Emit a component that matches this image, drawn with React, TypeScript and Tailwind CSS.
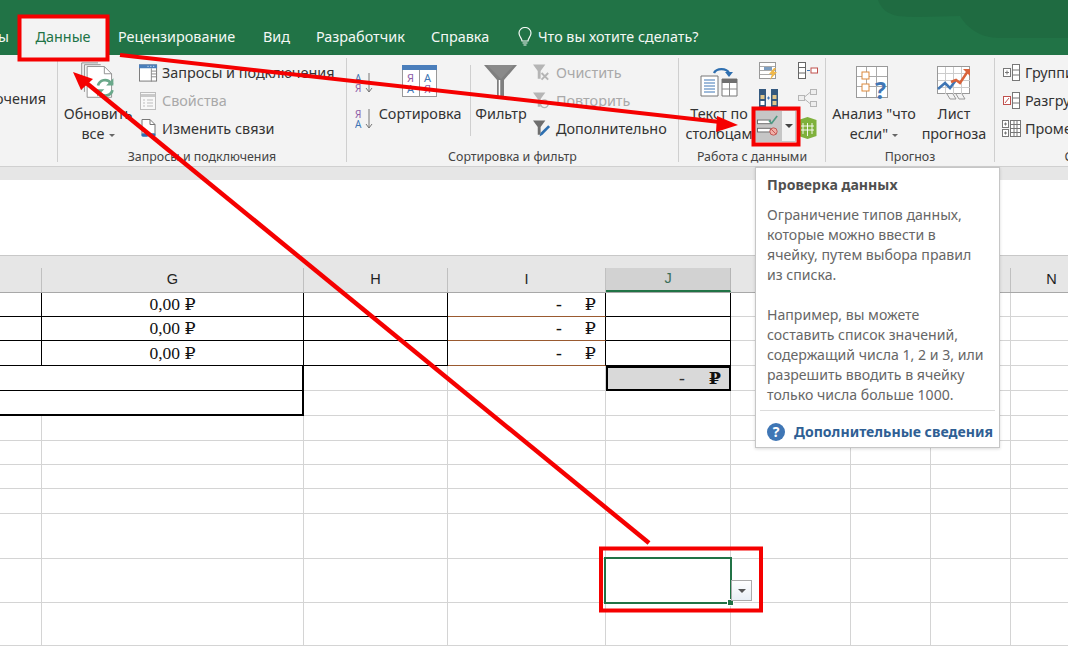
import React from 'react';

const Tab: React.FC<{ label: string; width: string }> = ({ label, width }) => (
  <div className={`${width} shrink-0 h-[37px] flex items-center text-[14.4px] text-[#f4f8f5]`}>{label}</div>
);

const SmallBtn: React.FC<{ icon: React.ReactNode; label: string; disabled?: boolean }> = ({ icon, label, disabled }) => (
  <div className={`h-[28px] flex items-center gap-[4px] text-[14.4px] whitespace-nowrap ${disabled ? 'text-[#a9a9a9]' : 'text-[#333]'}`}>
    <div className="w-[19px] flex justify-center shrink-0">{icon}</div>
    <span>{label}</span>
  </div>
);

const Group: React.FC<{ label: string; width: string; children: React.ReactNode }> = ({ label, width, children }) => (
  <div className={`${width} shrink-0 flex flex-col border-r border-[#cfcfcf]`}>
    <div className="flex-1 flex min-h-0">{children}</div>
    <div className="h-[16px] mb-[-3px] leading-[16px] text-center text-[12.4px] text-[#444] whitespace-nowrap">{label}</div>
  </div>
);

/* ---------- ribbon icons ---------- */
const RefreshIcon = () => (
  <svg width="38" height="38" viewBox="0 0 42 42" fill="none">
    <path d="M3 1h18M3 1v30" stroke="#8a8a8a" />
    <path d="M6 3h18M6 3v30" stroke="#8a8a8a" />
    <path d="M9 5h19l8 8v26H9z" fill="#fff" stroke="#8a8a8a" />
    <path d="M28 5v8h8" stroke="#8a8a8a" />
    <path d="M21 26a8 8 0 0 1 14-3l2 2M37 31a8 8 0 0 1-14 3l-2-2" stroke="#6aa88a" strokeWidth="3" />
    <path d="M38 18v8h-8zM20 38v-8h8z" fill="#6aa88a" />
  </svg>
);
const QueriesIcon = () => (
  <svg width="20" height="20" viewBox="0 0 20 20">
    <rect x=".5" y="1.5" width="18" height="17" fill="#fff" stroke="#777" />
    <rect x="0" y="1" width="19" height="4" fill="#4a7ebb" />
    <path d="M13 8h6M13 11h6M13 14h6M13 5v14" stroke="#888" />
    <path d="M9 3h1M12 3h1M15 3h1" stroke="#fff" />
  </svg>
);
const PropsIcon = () => (
  <svg width="17" height="18" viewBox="0 0 17 18" fill="none" stroke="#bdbdbd">
    <rect x=".5" y=".5" width="15" height="17" fill="#f8f8f8" />
    <path d="M1 3.5h14" strokeWidth="3" stroke="#c9c9c9" />
    <path d="M3 8h2M7 8h6M3 11h2M7 11h6M3 14h2M7 14h6" />
  </svg>
);
const LinksIcon = () => (
  <svg width="18" height="20" viewBox="0 0 18 20" fill="none">
    <path d="M2 .5h8l5 5v10H2z" fill="#fff" stroke="#777" />
    <path d="M10 .5v5h5" stroke="#777" />
    <path d="M3 16h4M10 16h4" stroke="#2e6fb0" strokeWidth="3.4" strokeLinecap="round" />
    <path d="M6 16h6" stroke="#2e6fb0" strokeWidth="1.5" />
  </svg>
);
const SortSmall: React.FC<{ top: string; bottom: string; topC: string; botC: string }> = ({ top, bottom, topC, botC }) => (
  <svg width="19" height="22" viewBox="0 0 19 22">
    <text x="0" y="10" fontSize="10" fontFamily="Noto Sans" fill={topC}>{top}</text>
    <text x="0" y="20" fontSize="10" fontFamily="Noto Sans" fill={botC}>{bottom}</text>
    <path d="M14 1v19M11 16l3 4 3-4" fill="none" stroke="#777" />
  </svg>
);
const SortBig = () => (
  <svg width="36" height="32" viewBox="0 0 36 32">
    <rect x=".5" y=".5" width="34" height="31" fill="#fff" stroke="#999" />
    <rect x="0" y="0" width="35" height="5" fill="#4a7ebb" />
    <path d="M17.5 5v26" stroke="#999" />
    <text x="5" y="17" fontSize="11" fontFamily="Noto Sans" fill="#8e5fa8">Я</text>
    <text x="5" y="28" fontSize="11" fontFamily="Noto Sans" fill="#3f76b5">А</text>
    <text x="22" y="17" fontSize="11" fontFamily="Noto Sans" fill="#3f76b5">А</text>
    <text x="22" y="28" fontSize="11" fontFamily="Noto Sans" fill="#8e5fa8">Я</text>
  </svg>
);
const FilterBig = () => (
  <svg width="34" height="34" viewBox="0 0 34 34">
    <path d="M0 0h33L20 15v18h-7V15z" fill="#7f7f7f" />
    <path d="M3 0h27L17 14z" fill="#8a8a8a" />
    <path d="M15.5 15v18" stroke="#fff" strokeWidth="1.5" />
  </svg>
);
const FilterSmall: React.FC<{ color: string; children?: React.ReactNode }> = ({ color, children }) => (
  <svg width="20" height="20" viewBox="0 0 20 20">
    <path d="M0 1h13L8 8v8H5V8z" fill={color} />
    {children}
  </svg>
);
const TextColIcon = () => (
  <svg width="38" height="32" viewBox="0 0 38 32" fill="none">
    <path d="M1 11h17v20H1z" fill="#fff" stroke="#777" />
    <path d="M4 15h11M4 18h11M4 21h11M4 24h11M4 27h11" stroke="#3f76b5" />
    <path d="M22 14h15v17H22z" fill="#fff" stroke="#777" />
    <path d="M22 14h15v4H22z" fill="#6e6e6e" />
    <path d="M29.5 18v13M22 24h15" stroke="#888" />
    <path d="M14 8a8 6 0 0 1 15 0" stroke="#2e6fb0" strokeWidth="2.4" />
    <path d="M25 7h8l-4 5z" fill="#2e6fb0" />
  </svg>
);
const FlashIcon = () => (
  <svg width="19" height="18" viewBox="0 0 19 18" fill="none">
    <rect x=".5" y=".5" width="16" height="16" fill="#fff" stroke="#999" />
    <path d="M1 4.5h15M1 8.5h15M1 12.5h15" stroke="#aaa" />
    <rect x="5" y="5" width="8" height="3" fill="#7b9dc0" />
    <path d="M15 6l-5 6h3l-2 6 7-8h-3l2-4z" fill="#f0b84a" />
  </svg>
);
const SplitIcon = () => (
  <svg width="20" height="17" viewBox="0 0 20 17" fill="none">
    <rect x=".5" y=".5" width="7" height="16" fill="#fff" stroke="#666" />
    <path d="M1 5.5h6M1 11h6" stroke="#666" />
    <path d="M9 8.5h3" stroke="#3f76b5" />
    <rect x="13" y="6" width="6.5" height="5" fill="#fff" stroke="#c0504d" />
  </svg>
);
const DupIcon = () => (
  <svg width="20" height="18" viewBox="0 0 20 18">
    <rect x="0" y="0" width="7" height="18" fill="#34597f" />
    <rect x="1.5" y="6" width="4" height="4" fill="#e2c88c" />
    <rect x="1.5" y="12" width="4" height="4" fill="#fff" />
    <rect x="12" y="0" width="7" height="18" fill="#34597f" />
    <rect x="13.5" y="6" width="4" height="4" fill="#e2c88c" />
    <rect x="13.5" y="12" width="4" height="4" fill="#e2c88c" />
    <path d="M8 9h3M9.5 7.5v3" stroke="#3f76b5" />
  </svg>
);
const RelIcon = () => (
  <svg width="19" height="18" viewBox="0 0 19 18" fill="none" stroke="#b5b5b5">
    <rect x=".5" y="6.5" width="6" height="5" fill="#eee" />
    <rect x="12.5" y=".5" width="6" height="5" fill="#eee" />
    <rect x="12.5" y="12.5" width="6" height="5" fill="#eee" />
    <path d="M6.5 8l6-5M6.5 10l6 5" />
  </svg>
);
const ValidationIcon = () => (
  <svg width="24" height="22" viewBox="0 0 24 24" fill="none">
    <rect x=".5" y="5.5" width="14" height="4" fill="#fff" stroke="#666" />
    <rect x=".5" y="14.5" width="14" height="4" fill="#fff" stroke="#666" />
    <path d="M13 6l3 3 6-8" stroke="#4f9a83" strokeWidth="1.8" />
    <circle cx="18" cy="18" r="4" fill="#f0b0a8" stroke="#c0504d" />
    <path d="M15.5 15.5l5 5" stroke="#c0504d" />
  </svg>
);
const ModelIcon = () => (
  <svg width="19" height="22" viewBox="0 0 19 22">
    <path d="M9.5 0l9 3v16l-9 3-9-3V3z" fill="#7fb13c" />
    <path d="M5 6v11M9.5 6v13M14 6v11M3 9h13M3 13h13" stroke="#fff" strokeWidth=".9" />
  </svg>
);
const WhatIfIcon = () => (
  <svg width="36" height="36" viewBox="0 0 36 36" fill="none">
    <rect x=".5" y=".5" width="31" height="31" fill="#fff" stroke="#999" />
    <path d="M10.5 1v30M20.5 1v30M1 10.5h30M1 20.5h30" stroke="#aaa" />
    <rect x="6" y="6" width="7" height="7" fill="#fff" stroke="#dd8a3c" />
    <rect x="6" y="18" width="7" height="7" fill="#fff" stroke="#dd8a3c" />
    <text x="19" y="33" fontSize="23" fontWeight="700" fontFamily="Noto Sans" fill="#3f76b5">?</text>
  </svg>
);
const ForecastIcon = () => (
  <svg width="34" height="34" viewBox="0 0 34 34" fill="none">
    <rect x=".5" y=".5" width="32" height="27" fill="#fff" stroke="#999" />
    <path d="M8.5 1v27M16.5 1v27M24.5 1v27M1 7.5h32M1 14.5h32M1 21.5h32" stroke="#ccc" />
    <path d="M1 23l7-6 5 5 6-8" stroke="#3f76b5" strokeWidth="2.5" />
    <path d="M14 16l5-2 4 3 8-12" stroke="#d9623a" strokeWidth="2.5" />
    <path d="M26 3h7v7z" fill="#d9623a" />
    <path d="M10 28l3 5h6l-3-5M19 28l3 5h6l-3-5" stroke="#999" />
  </svg>
);
const OutlineIcon: React.FC<{ red?: boolean }> = ({ red }) => (
  <svg width="18" height="18" viewBox="0 0 18 18" fill="none" stroke="#777">
    <rect x="9.5" y=".5" width="7" height="16" fill="#fff" />
    <path d="M10 6h6M10 11h6" />
    <rect x=".5" y="4.5" width="7" height="8" fill="#fff" stroke={red ? '#c0504d' : '#777'} />
    {red ? <path d="M2 11l4-5" stroke="#c0504d" /> : <path d="M2 8.5h4M4 6.5v4" />}
  </svg>
);
const SubtotalIcon = () => (
  <svg width="19" height="18" viewBox="0 0 19 18" fill="none" stroke="#777">
    <rect x=".5" y=".5" width="6" height="7" fill="#fff" />
    <rect x=".5" y="9.5" width="6" height="7" fill="#fff" />
    <path d="M2 4h3M3.5 2.5v3M2 13h3M3.5 11.5v3" />
    <rect x="8.5" y=".5" width="10" height="16" fill="#fff" />
    <path d="M9 4.5h9M9 8.5h9M9 12.5h9M12 1v15M15 1v15" />
  </svg>
);
const Caret = () => <span className="inline-block ml-[4px] align-middle w-0 h-0 border-x-[3px] border-x-transparent border-t-[3px] border-t-[#666]" />;

const BigBtn: React.FC<{ icon: React.ReactNode; lines: React.ReactNode[]; width: string; top?: string }> = ({ icon, lines, width, top = 'pt-[7px]' }) => (
  <div className={`${width} shrink-0 flex flex-col items-center text-[14.4px] leading-[20px] text-[#333] whitespace-nowrap`}>
    <div className={`h-[46px] ${top} flex items-start justify-center`}>{icon}</div>
    {lines.map((l, i) => <div key={i}>{l}</div>)}
  </div>
);

/* ---------- sheet ---------- */
const HeadCell: React.FC<{ w: string; label?: string; selected?: boolean }> = ({ w, label, selected }) => (
  <div className={`${w} shrink-0 h-[24px] flex items-center justify-center text-[14.5px] font-['Liberation_Sans',sans-serif] ${selected ? 'bg-[#d2d2d2] text-[#3a6d58] border-b-2 border-b-[#217346] mb-[-1px] border-r border-r-[#b5b5b5]' : 'text-[#222] border-r border-r-[#c0c0c0]'}`}>{label}</div>
);

const Rub: React.FC<{ children: React.ReactNode }> = ({ children }) => (
  <span className="font-['Liberation_Serif','DejaVu_Serif',serif] text-[17.5px] text-[#111]">{children}</span>
);

const Cell: React.FC<{ w: string; cls?: string; children?: React.ReactNode }> = ({ w, cls = 'border-r border-b border-[#d4d4d4]', children }) => (
  <div className={`${w} shrink-0 h-full ${cls}`}>{children}</div>
);

const A = 'w-[42px]', G = 'w-[262px]', H = 'w-[144px]', I = 'w-[158px]', J = 'w-[125px]', K = 'w-[120px]', L = 'w-[80px]', M = 'w-[80px]', N = 'w-[82px]';

const Rest = () => (
  <>
    <Cell w={K} />
    <Cell w={L} />
    <Cell w={M} />
    <Cell w={N} />
  </>
);

const MoneyRow: React.FC<{ h: string }> = ({ h }) => (
  <div className={`flex ${h}`}>
    <Cell w={A} cls="border-r border-b border-black" />
    <Cell w={G} cls="border-r border-b border-black flex items-center justify-center"><Rub>0,00 ₽</Rub></Cell>
    <Cell w={H} cls="border-r border-b border-black" />
    <Cell w={I} cls="border-r border-r-black border-b border-b-[#9a5a30] flex items-center justify-end pr-[9px]">
      <Rub><span className="font-bold mr-[23px]">-</span>₽</Rub>
    </Cell>
    <Cell w={J} cls="border-r border-b border-black" />
    <Rest />
  </div>
);

const heights = ['h-[25px]', 'h-[24px]', 'h-[24px]', 'h-[25px]', 'h-[45px]', 'h-[44px]', 'h-[43px]'];

const App: React.FC = () => (
  <div className="relative w-[1068px] h-[647px] overflow-hidden bg-white font-['Noto_Sans',sans-serif]">
    {/* Title band with tabs */}
    <div className="relative h-[55px] bg-[#217346] overflow-hidden">
      <svg className="absolute right-0 top-0" width="240" height="40" viewBox="0 0 240 40">
        <path d="M0 0h50c4 10 10 14 20 16 20 2 40 0 62 0 6 10 18 22 40 22h68V0z" fill="#1f6b41" />
      </svg>
      <div className="relative h-full flex items-end whitespace-nowrap">
        <div className="w-[9px] overflow-hidden flex justify-end"><Tab label="ы" width="w-auto" /></div>
        <div className="h-[37px] ml-[11px] mr-[12px] w-[86px] bg-[#f3f3f3] text-[#217346] text-[14.4px] flex items-center justify-center">Данные</div>
        <Tab label="Рецензирование" width="w-[145px]" />
        <Tab label="Вид" width="w-[53px]" />
        <Tab label="Разработчик" width="w-[115px]" />
        <Tab label="Справка" width="w-[85px]" />
        <div className="h-[37px] flex items-center gap-[4px] text-[14.3px] text-[#f4f8f5]">
          <svg width="18" height="20" viewBox="0 0 18 20" fill="none" stroke="#f4f8f5" strokeWidth="1.2">
            <path d="M6 14c0-3-3-4-3-8a6 5.5 0 0 1 12 0c0 4-3 5-3 8z" />
            <path d="M6.5 16h5M7.5 18h3" />
          </svg>
          <span>Что вы хотите сделать?</span>
        </div>
      </div>
    </div>

    {/* Ribbon */}
    <div className="h-[111px] bg-[#f3f3f3] flex overflow-hidden pt-[3px] pb-[4px]">
      <Group label="" width="w-[58px]">
        <div className="w-[46px] pt-[31px] text-[14.4px] leading-[20px] text-[#333] whitespace-nowrap flex justify-end">очения</div>
      </Group>
      <Group label="Запросы и подключения" width="w-[289px]">
        <div className="flex pl-[4px] gap-[5px]">
          <BigBtn width="w-[72px]" top="pt-[4px]" icon={<RefreshIcon />} lines={['Обновить', <>все<Caret /></>]} />
          <div className="pt-[1px]">
            <SmallBtn icon={<QueriesIcon />} label="Запросы и подключения" />
            <SmallBtn icon={<PropsIcon />} label="Свойства" disabled />
            <SmallBtn icon={<LinksIcon />} label="Изменить связи" />
          </div>
        </div>
      </Group>
      <Group label="Сортировка и фильтр" width="w-[332px]">
        <div className="flex">
          <div className="w-[32px] pl-[8px] pt-[14px] flex flex-col gap-[14px]">
            <SortSmall top="А" bottom="Я" topC="#3f76b5" botC="#8e5fa8" />
            <SortSmall top="Я" bottom="А" topC="#8e5fa8" botC="#3f76b5" />
          </div>
          <BigBtn width="w-[82px]" icon={<SortBig />} lines={['Сортировка']} />
          <div className="w-px h-[71px] mt-[7px] ml-[9px] bg-[#cfcfcf]" />
          <BigBtn width="w-[60px]" icon={<FilterBig />} lines={['Фильтр']} />
          <div className="pt-[1px] ml-[2px]">
            <SmallBtn disabled label="Очистить" icon={<FilterSmall color="#b5b5b5"><path d="M9 10l7 7M16 10l-7 7" stroke="#b5b5b5" strokeWidth="2" /></FilterSmall>} />
            <SmallBtn disabled label="Повторить" icon={<FilterSmall color="#b5b5b5"><circle cx="12" cy="13" r="4" fill="none" stroke="#b5b5b5" strokeWidth="1.5" /></FilterSmall>} />
            <SmallBtn label="Дополнительно" icon={<FilterSmall color="#6e6e6e"><path d="M7 18l1-4 8-8 2 2-8 8z" fill="#2e6fb0" /></FilterSmall>} />
          </div>
        </div>
      </Group>
      <Group label="Работа с данными" width="w-[147px]">
        <div className="flex pl-[6px]">
          <BigBtn width="w-[68px]" icon={<TextColIcon />} lines={['Текст по', 'столбцам']} />
          <div className="flex flex-col">
            <div className="h-[31px] pt-[4px] pl-[6px] flex">
              <div className="w-[39px]"><FlashIcon /></div>
              <SplitIcon />
            </div>
            <div className="h-[21px] pl-[6px] flex">
              <div className="w-[39px]"><DupIcon /></div>
              <RelIcon />
            </div>
            <div className="h-[32px] pl-[2px] flex items-center">
              <div className="w-[41px] h-[32px] flex bg-[#c6c6c6]">
                <div className="w-[26px] flex items-center justify-center"><ValidationIcon /></div>
                <div className="flex-1 bg-[#f3f3f3] border border-[#c6c6c6] flex items-center justify-center">
                  <span className="w-0 h-0 border-x-[4px] border-x-transparent border-t-[4px] border-t-[#444]" />
                </div>
              </div>
              <div className="ml-[2px] pt-[4px]"><ModelIcon /></div>
            </div>
          </div>
        </div>
      </Group>
      <Group label="Прогноз" width="w-[169px]">
        <div className="flex pl-[4px]">
          <BigBtn width="w-[88px]" top="pt-[8px]" icon={<WhatIfIcon />} lines={['Анализ "что', <>если"<Caret /></>]} />
          <BigBtn width="w-[72px]" top="pt-[8px]" icon={<ForecastIcon />} lines={['Лист', 'прогноза']} />
        </div>
      </Group>
      <Group label="Структура" width="w-[200px]">
        <div className="pt-[1px] pl-[7px]">
          <SmallBtn icon={<OutlineIcon />} label="Группировать" />
          <SmallBtn icon={<OutlineIcon red />} label="Разгруппировать" />
          <SmallBtn icon={<SubtotalIcon />} label="Промежуточный итог" />
        </div>
      </Group>
    </div>

    {/* Grey strip + empty formula area */}
    <div className="h-[14px] bg-[#e6e6e6] border-t border-[#d0d0d0]" />
    <div className="h-[76px] bg-white border-b border-[#c8c8c8]" />

    {/* Column headers */}
    <div className="h-[37px] bg-[#e6e6e6] border-b border-[#a8a8a8] pt-[12px]">
      <div className="flex">
        <HeadCell w={A} />
        <HeadCell w={G} label="G" />
        <HeadCell w={H} label="H" />
        <HeadCell w={I} label="I" />
        <HeadCell w={J} label="J" selected />
        <HeadCell w={K} />
        <HeadCell w={L} />
        <HeadCell w={M} />
        <HeadCell w={N} label="N" />
      </div>
    </div>

    {/* Cells */}
    <MoneyRow h="h-[24px]" />
    <MoneyRow h="h-[24px]" />
    <MoneyRow h="h-[25px]" />
    <div className="flex h-[25px]">
      <Cell w="w-[304px]" cls="border-r-2 border-b border-black" />
      <Cell w={H} />
      <Cell w={I} />
      <Cell w={J} cls="border-2 border-black bg-[#d9d9d9] flex items-center justify-end pr-[8px]">
        <Rub><span className="mr-[24px] font-bold text-[#333]">-</span><b>₽</b></Rub>
      </Cell>
      <Rest />
    </div>
    <div className="flex h-[25px]">
      <Cell w="w-[304px]" cls="border-r-2 border-b-2 border-black" />
      <Cell w={H} />
      <Cell w={I} />
      <Cell w={J} />
      <Rest />
    </div>
    {heights.map((h, i) => (
      <div key={i} className={`flex ${h}`}>
        <Cell w={A} />
        <Cell w={G} />
        <Cell w={H} />
        <Cell w={I} />
        <Cell w={J} />
        <Rest />
      </div>
    ))}

    {/* Selected cell with list button */}
    <div className="absolute left-[604px] top-[557px] w-[128px] h-[47px] border-2 border-[#217346]">
      <div className="absolute right-[-4px] bottom-[-4px] w-[5px] h-[5px] bg-[#217346] border border-white box-content" />
    </div>
    <div className="absolute left-[731px] top-[580px] w-[21px] h-[21px] border border-[#ababab] bg-gradient-to-b from-white to-[#e8eef5] flex items-center justify-center">
      <span className="w-0 h-0 border-x-[4px] border-x-transparent border-t-[4px] border-t-[#555]" />
    </div>

    {/* Screen tip */}
    <div className="absolute left-[755px] top-[167px] w-[245px] h-[281px] bg-white border border-[#c6c6c6] shadow-[0_1px_3px_rgba(0,0,0,0.15)] flex flex-col pl-[11px] pr-[4px] text-[14.1px] leading-[20px] text-[#666] whitespace-nowrap">
      <div className="font-bold text-[#505050] mt-[7px] mb-[10px]">Проверка данных</div>
      <div>Ограничение типов данных,</div>
      <div>которые можно ввести в</div>
      <div>ячейку, путем выбора правил</div>
      <div>из списка.</div>
      <div className="h-[20px]" />
      <div>Например, вы можете</div>
      <div>составить список значений,</div>
      <div>содержащий числа 1, 2 и 3, или</div>
      <div>разрешить вводить в ячейку</div>
      <div>только числа больше 1000.</div>
      <div className="h-px bg-[#dcdcdc] ml-[-7px] mt-[5px]" />
      <div className="flex items-center gap-[9px] mt-[11px] font-bold text-[#2f5f94]">
        <svg width="18" height="18" viewBox="0 0 18 18" className="shrink-0">
          <circle cx="9" cy="9" r="9" fill="#3f76b5" />
          <text x="9" y="14" textAnchor="middle" fontSize="14" fontWeight="700" fontFamily="Noto Sans" fill="#fff">?</text>
        </svg>
        <span>Дополнительные сведения</span>
      </div>
    </div>

    {/* Red annotations drawn over the screenshot */}
    <svg className="absolute inset-0 pointer-events-none" width="1068" height="647" viewBox="0 0 1068 647" fill="none">
      <rect x="19.5" y="16.5" width="88" height="43" stroke="#f50000" strokeWidth="4" />
      <rect x="753.5" y="108.5" width="45" height="36" stroke="#f50000" strokeWidth="4" />
      <rect x="601" y="548.5" width="160" height="62" stroke="#f50000" strokeWidth="4" />
      <path d="M120 55L720 122" stroke="#f50000" strokeWidth="4" />
      <path d="M738 125L717 116L716 132z" fill="#f50000" />
      <path d="M649 543L84 81" stroke="#f50000" strokeWidth="4.5" />
      <path d="M73 72L81 90L93 79z" fill="#f50000" />
    </svg>
  </div>
);

export default App;
